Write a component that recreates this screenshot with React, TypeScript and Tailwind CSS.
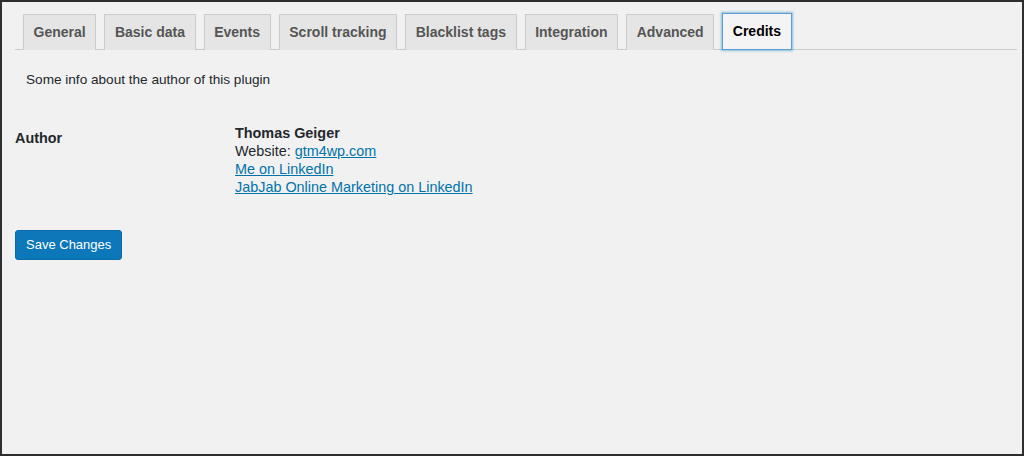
const tabs = ['General', 'Basic data', 'Events', 'Scroll tracking', 'Blacklist tags', 'Integration', 'Advanced', 'Credits'];

export default function App() {
  return (
    <div
      className="w-[1024px] h-[456px] overflow-hidden border-2 border-[#2e2e2e] bg-[#f1f1f1] text-[#23282d]"
      style={{ fontFamily: '"Liberation Sans", Arial, sans-serif' }}
    >
      <div className="pl-[13px] pr-[5px] pt-[11px]">
        <nav className="flex items-end border-b border-[#ccc] pl-[8px] gap-[8px]">
          {tabs.map((t) => {
            const active = t === 'Credits';
            return (
              <div
                key={t}
                className={
                  active
                    ? '-mb-px h-[37px] px-[9.6px] flex items-center text-[14px] font-bold text-black bg-[#f4f4f4] border border-[#5b9dd9] shadow-[0_0_2px_1px_rgba(30,140,190,0.5)]'
                    : '-mb-px h-[36px] px-[9.6px] flex items-center text-[14px] font-bold text-[#555] bg-[#e5e5e5] border border-b-0 border-[#ccc]'
                }
              >
                {t}
              </div>
            );
          })}
        </nav>

        <p className="pl-[11px] mt-[21px] text-[13.6px] leading-[18px]">Some info about the author of this plugin</p>

        <div className="flex mt-[35px] text-[14.4px] leading-[18px]">
          <div className="w-[220px] pt-[5px] font-bold">Author</div>
          <div className="flex flex-col">
            <span className="font-bold">Thomas Geiger</span>
            <span>
              Website: <a className="text-[#0073aa] underline">gtm4wp.com</a>
            </span>
            <a className="text-[#0073aa] underline">Me on LinkedIn</a>
            <a className="text-[#0073aa] underline">JabJab Online Marketing on LinkedIn</a>
          </div>
        </div>

        <button className="mt-[34px] h-[30px] px-[10px] rounded-[3px] bg-[#0d78b9] border border-[#0a6ba8] text-white text-[13px]">
          Save Changes
        </button>
      </div>
    </div>
  );
}
